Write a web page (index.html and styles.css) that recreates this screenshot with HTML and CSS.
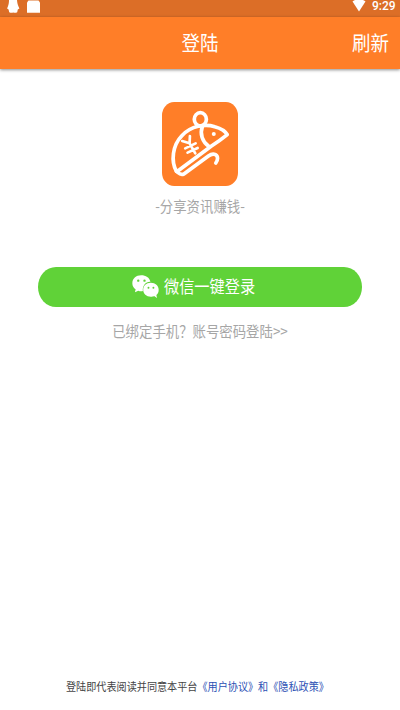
FILE: index.html
```html
<!DOCTYPE html>
<html lang="zh-CN">
<head>
<meta charset="utf-8">
<title>登陆</title>
<link rel="stylesheet" href="styles.css">
</head>
<body>
<div class="status">
  <svg class="notices" viewBox="0 0 44 16">
    <path d="M9 0h8c.2 3 .6 5 2.400 8.500l-1.600 1-.6 2.700c-1.500.7-2.800.7-4 .2-1.200.5-2.500.5-4-.2l-.6-2.700-1.500-1C8.700 5 9 3 9 0z"/>
    <path d="M28.500.5h10l1.500 2v10.300H27V2.500z"/>
  </svg>
  <svg class="wifi" viewBox="0 0 16 12"><path d="M1.500 1.500C3 .4 4 0 5 0h6c1 0 2 .4 3.500 1.500L8 11.500z"/></svg>
  <span class="time">9:29</span>
</div>
<header class="bar">
  <h1 class="text">登陆</h1>
  <span class="refresh text">刷新</span>
</header>
<main class="main">
  <svg class="logo" viewBox="38 36 226 252" preserveAspectRatio="none">
    <rect x="38" y="36" width="226" height="252" rx="36" ry="40" fill="#ff7e28"/>
    <g fill="none" stroke="#fff" stroke-width="11" stroke-linecap="round" stroke-linejoin="round">
      <ellipse cx="152" cy="88" rx="18" ry="20"/>
      <path d="M81 244C64 214 69 166 97 137C125 107 166 101 195 110C213 115 227 124 232 134Q210 152 184 169L85 243"/>
      <path d="M158 110C150 131 158 156 177 169"/>
      <path d="M81 244C87 248 91 257 103 252L176 198Q188 189 197 194C206 199 204 211 198 219"/>
      <g stroke-width="8"><path d="M98 153L120 160L121 138M120 160L137 190M107 175L138 160M114 188L144 174"/></g>
    </g>
    <circle cx="192" cy="132" r="6" fill="#fff"/>
  </svg>
  <p class="slogan text">-分享资讯赚钱-</p>
  <div class="login">
    <svg class="wechat" viewBox="0 0 82 72" preserveAspectRatio="none">
      <path fill="#fff" d="M28 1C12 1 1 11 1 25c0 8 4 14 10 18l-2 9 10-5c5 2 10 2 14 1C31 32 42 19 56 20 53 8 42 1 28 1z"/>
      <path fill="#fff" d="M57 23C43 23 34 32 34 44s10 21 23 21c4 0 7 0 10-2l9 6-2-9c5-4 7-9 7-16 0-12-10-21-24-21z"/>
      <g fill="#60d238"><circle cx="19" cy="17" r="3.500"/><circle cx="38" cy="17" r="3.500"/><circle cx="50" cy="38" r="3"/><circle cx="65" cy="38" r="3"/></g>
    </svg>
    <span class="label text">微信一键登录</span>
  </div>
  <p class="account text">已绑定手机？账号密码登陆&gt;&gt;</p>
</main>
<footer class="terms text">登陆即代表阅读并同意本平台<span class="links">《用户协议》和《隐私政策》</span></footer>
</body>
</html>
```
FILE: styles.css
```css
* { box-sizing: border-box; margin: 0; padding: 0; }
body {
  width: 400px;
  height: 710px;
  display: flex;
  flex-direction: column;
  overflow: hidden;
  background: #fff;
  font-family: "Noto Sans CJK SC", sans-serif;
}
svg { display: block; flex: none; }
.text { display: block; white-space: nowrap; transform: scaleY(1.12); }
.status {
  height: 17px;
  flex: none;
  display: flex;
  align-items: flex-start;
  background: #dc6e27;
  color: #fff;
}
.notices { width: 44px; height: 16px; fill: #fff; }
.wifi { width: 16px; height: 12px; margin-left: 307px; fill: #fff; }
.time {
  margin-left: 5px;
  font: 500 12px/12px Roboto, sans-serif;
}
.bar {
  height: 52px;
  flex: none;
  display: grid;
  grid-template-columns: 1fr auto 1fr;
  align-items: center;
  padding: 0 11px 2px;
  background: #ff7e28;
  box-shadow: 0 1px 3px rgba(0, 0, 0, .45);
  color: #fff;
  font-size: 18.5px;
  line-height: 26px;
}
.bar h1 { grid-column: 2; font-size: inherit; font-weight: 400; }
.refresh { justify-self: end; }
.main {
  flex: 1;
  display: flex;
  flex-direction: column;
  align-items: center;
  padding-top: 33px;
}
.logo { width: 76px; height: 84px; }
.slogan { margin-top: 8px; color: #a6a6a6; font-size: 13.4px; line-height: 22px; }
.login {
  width: 324px;
  height: 40px;
  margin-top: 51px;
  padding-right: 13px;
  display: flex;
  align-items: center;
  justify-content: center;
  gap: 5px;
  border-radius: 18px / 20px;
  background: #60d238;
  color: #fff;
  font-size: 15.2px;
  line-height: 22px;
}
.label { padding-bottom: 4px; }
.wechat { width: 27px; height: 24px; }
.account { margin-top: 12px; color: #a6a6a6; font-size: 13.4px; line-height: 22px; }
.terms {
  height: 33px;
  padding-left: 66px;
  color: #444;
  font-size: 10.12px;
  line-height: 20px;
}
.links { color: #2c50b4; }
```
